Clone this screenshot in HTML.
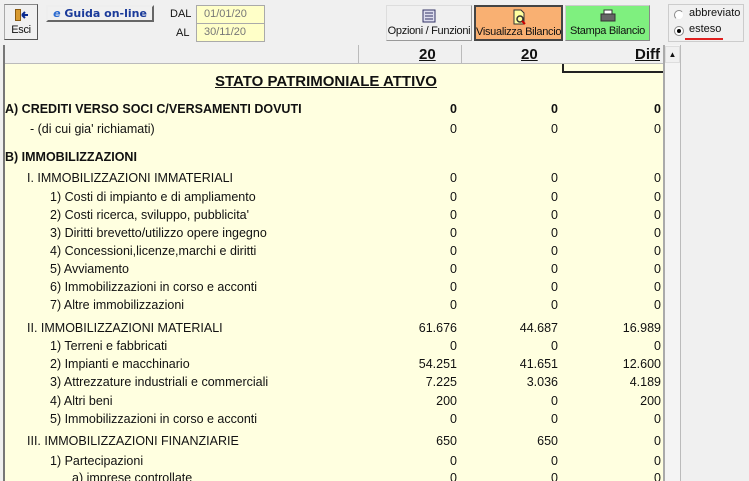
<!DOCTYPE html>
<html><head><style>
*{margin:0;padding:0;box-sizing:border-box}
body{width:749px;height:481px;overflow:hidden;background:#f0f0f0;font-family:"Liberation Sans",Tahoma,sans-serif;font-size:12.5px;color:#111;position:relative}
.a{position:absolute;white-space:nowrap}
.btn{position:absolute;border:1px solid #999;background:#f0f0f0;font-size:11px;text-align:center;white-space:nowrap;overflow:hidden;letter-spacing:-0.3px}
.sheet{position:absolute;left:3px;top:45px;width:660px;height:436px;background:#ffffe0;border-left:2px solid #777;overflow:hidden}
.hdr{position:absolute;left:0;top:0;width:660px;height:19px;background:#f0f0f0;border-bottom:1px solid #bbb}
.r{position:absolute;left:0;width:660px;height:18px;line-height:18px}
.r span{position:absolute;white-space:nowrap}
.n1,.n2,.n3{text-align:right;width:100px}
.n1{left:352px}.n2{left:453px}.n3{left:556px}
.b{font-weight:bold}
</style></head><body>
<div class="btn" style="left:4px;top:4px;width:34px;height:36px;border-color:#888 #555 #555 #aaa">
<svg width="16" height="16" style="margin-top:2px"><rect x="2" y="2" width="6" height="12" fill="#8a5a10"/><rect x="3" y="3" width="4" height="10" fill="#d89a30"/><path d="M9 8h6M9 8l3-3M9 8l3 3" stroke="#0a2a90" stroke-width="2" fill="none"/></svg>
<div style="font-size:11px;margin-top:-2px">Esci</div></div>
<div class="btn" style="left:46px;top:5px;width:108px;height:17px;border:2px solid;border-color:#eee #666 #666 #eee;font-weight:bold;color:#1a3a9a;line-height:13px;font-family:'DejaVu Sans',sans-serif;font-size:11px;letter-spacing:0">
<span style="color:#2a6ad0;font-style:italic">e</span> Guida on-line</div>
<div class="a" style="left:170px;top:8px;font-size:11px">DAL</div>
<div class="a" style="left:176px;top:27px;font-size:11px">AL</div>
<div class="a" style="left:196px;top:5px;width:69px;height:19px;background:#ffffc8;border:1px solid #aaa;color:#777;font-size:11px;line-height:17px;padding-left:7px">01/01/20</div>
<div class="a" style="left:196px;top:23px;width:69px;height:19px;background:#ffffc8;border:1px solid #aaa;color:#777;font-size:11px;line-height:17px;padding-left:7px">30/11/20</div>
<div class="btn" style="left:386px;top:5px;width:86px;height:36px;border-color:#ddd #999 #999 #ddd;padding-top:3px">
<svg width="14" height="14"><rect x="1" y="1" width="12" height="12" fill="#dde" stroke="#336"/><path d="M3 4h8M3 7h8M3 10h8" stroke="#336"/></svg><div style="margin-top:-1px">Opzioni / Funzioni</div></div>
<div class="btn" style="left:474px;top:5px;width:89px;height:36px;background:#f9b072;border:2px solid #444;padding-top:2px">
<svg width="14" height="16"><path d="M2 1h7l3 3v11H2z" fill="#ffffa0" stroke="#333"/><circle cx="8" cy="10" r="3" fill="none" stroke="#333" stroke-width="1.5"/><path d="M10 12l3 3" stroke="#c00" stroke-width="2"/></svg><div style="margin-top:-2px">Visualizza Bilancio</div></div>
<div class="btn" style="left:565px;top:5px;width:85px;height:36px;background:#7ff07f;border-color:#ccc #888 #888 #ccc;padding-top:3px">
<svg width="16" height="14"><rect x="4" y="1" width="8" height="5" fill="#fff" stroke="#333"/><rect x="1" y="5" width="14" height="7" fill="#666" stroke="#333"/></svg><div style="margin-top:-1px">Stampa Bilancio</div></div>
<div class="a" style="left:668px;top:4px;width:76px;height:38px;border:1px solid #ccc;font-size:11px">
<div class="a" style="left:5px;top:5px;width:10px;height:10px;border-radius:50%;border:1px solid #999;border-color:#888 #eee #eee #888;background:#fff"></div>
<div class="a" style="left:20px;top:2px">abbreviato</div>
<div class="a" style="left:5px;top:21px;width:10px;height:10px;border-radius:50%;border:1px solid #888;background:#fff"><div style="width:4px;height:4px;background:#000;border-radius:50%;margin:2px"></div></div>
<div class="a" style="left:20px;top:18px">esteso</div>
<div class="a" style="left:16px;top:33px;width:38px;height:2px;background:#e02020"></div>
</div>
<div class="sheet">
<div class="hdr">
<div class="a" style="left:353px;top:0;width:1px;height:19px;background:#bbb"></div>
<div class="a" style="left:456px;top:0;width:1px;height:19px;background:#bbb"></div>
<span class="a b" style="left:414px;top:1px;font-size:15px;text-decoration:underline">20</span>
<span class="a b" style="left:516px;top:1px;font-size:15px;text-decoration:underline">20</span>
<span class="a b" style="left:630px;top:1px;font-size:15px;text-decoration:underline">Diff</span>
</div>
<div class="a" style="left:557px;top:19px;width:103px;height:9px;border:2px solid #222;border-top:0"></div>
<div class="a b" style="left:210px;top:28px;font-size:15px;text-decoration:underline">STATO PATRIMONIALE ATTIVO</div>
<div class="r b" style="top:55px"><span style="left:0px">A) CREDITI VERSO SOCI C/VERSAMENTI DOVUTI</span><span class="n1">0</span><span class="n2">0</span><span class="n3">0</span></div>
<div class="r" style="top:75px"><span style="left:25px">- (di cui gia' richiamati)</span><span class="n1">0</span><span class="n2">0</span><span class="n3">0</span></div>
<div class="r b" style="top:103px"><span style="left:0px">B) IMMOBILIZZAZIONI</span></div>
<div class="r" style="top:124px"><span style="left:22px">I. IMMOBILIZZAZIONI IMMATERIALI</span><span class="n1">0</span><span class="n2">0</span><span class="n3">0</span></div>
<div class="r" style="top:143px"><span style="left:45px">1) Costi di impianto e di ampliamento</span><span class="n1">0</span><span class="n2">0</span><span class="n3">0</span></div>
<div class="r" style="top:161px"><span style="left:45px">2) Costi ricerca, sviluppo, pubblicita'</span><span class="n1">0</span><span class="n2">0</span><span class="n3">0</span></div>
<div class="r" style="top:179px"><span style="left:45px">3) Diritti brevetto/utilizzo opere ingegno</span><span class="n1">0</span><span class="n2">0</span><span class="n3">0</span></div>
<div class="r" style="top:197px"><span style="left:45px">4) Concessioni,licenze,marchi e diritti</span><span class="n1">0</span><span class="n2">0</span><span class="n3">0</span></div>
<div class="r" style="top:215px"><span style="left:45px">5) Avviamento</span><span class="n1">0</span><span class="n2">0</span><span class="n3">0</span></div>
<div class="r" style="top:233px"><span style="left:45px">6) Immobilizzazioni in corso e acconti</span><span class="n1">0</span><span class="n2">0</span><span class="n3">0</span></div>
<div class="r" style="top:251px"><span style="left:45px">7) Altre immobilizzazioni</span><span class="n1">0</span><span class="n2">0</span><span class="n3">0</span></div>
<div class="r" style="top:274px"><span style="left:22px">II. IMMOBILIZZAZIONI MATERIALI</span><span class="n1">61.676</span><span class="n2">44.687</span><span class="n3">16.989</span></div>
<div class="r" style="top:292px"><span style="left:45px">1) Terreni e fabbricati</span><span class="n1">0</span><span class="n2">0</span><span class="n3">0</span></div>
<div class="r" style="top:310px"><span style="left:45px">2) Impianti e macchinario</span><span class="n1">54.251</span><span class="n2">41.651</span><span class="n3">12.600</span></div>
<div class="r" style="top:328px"><span style="left:45px">3) Attrezzature industriali e commerciali</span><span class="n1">7.225</span><span class="n2">3.036</span><span class="n3">4.189</span></div>
<div class="r" style="top:347px"><span style="left:45px">4) Altri beni</span><span class="n1">200</span><span class="n2">0</span><span class="n3">200</span></div>
<div class="r" style="top:365px"><span style="left:45px">5) Immobilizzazioni in corso e acconti</span><span class="n1">0</span><span class="n2">0</span><span class="n3">0</span></div>
<div class="r" style="top:387px"><span style="left:22px">III. IMMOBILIZZAZIONI FINANZIARIE</span><span class="n1">650</span><span class="n2">650</span><span class="n3">0</span></div>
<div class="r" style="top:407px"><span style="left:45px">1) Partecipazioni</span><span class="n1">0</span><span class="n2">0</span><span class="n3">0</span></div>
<div class="r" style="top:424px"><span style="left:67px">a) imprese controllate</span><span class="n1">0</span><span class="n2">0</span><span class="n3">0</span></div>
</div>
<div class="a" style="left:663px;top:45px;width:18px;height:436px;background:#f4f4f4;border-left:2px solid #aaa;border-right:1px solid #bbb"></div>
<div class="a" style="left:665px;top:46px;width:15px;height:17px;background:#f0f0f0;border:1px solid #ddd;font-size:8px;text-align:center;line-height:15px">▲</div>
</body></html>
